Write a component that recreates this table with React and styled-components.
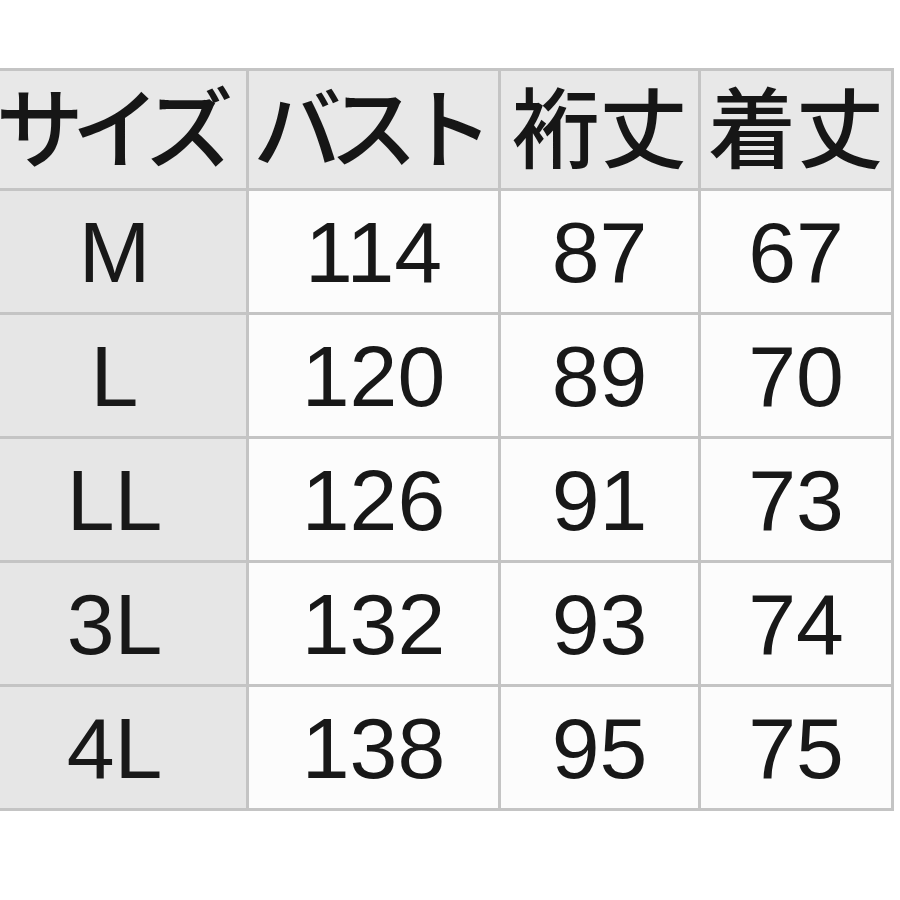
import React from 'react'
import styled, { createGlobalStyle } from 'styled-components'

const GlobalStyle = createGlobalStyle`
  html, body {
    margin: 0;
    padding: 0;
    background: #ffffff;
    overflow: hidden;
  }
`

const Page = styled.div`
  width: 900px;
  height: 900px;
  padding-top: 68px;
  box-sizing: border-box;
  background: #ffffff;
  overflow: hidden;
`

const Table = styled.div`
  display: grid;
  grid-template-columns: 263px 249px 197px 190px;
  grid-template-rows: 117px repeat(5, 121px);
  gap: 3px;
  width: max-content;
  margin-left: -20px;
  border: 3px solid #c4c4c4;
  background: #c4c4c4;
`

const HeadCell = styled.div`
  display: flex;
  align-items: center;
  justify-content: center;
  padding-bottom: 14px;
  box-sizing: border-box;
  background: #e8e8e8;
  color: #161616;
  font-family: "Noto Sans CJK JP", sans-serif;
  font-size: 88px;
  font-weight: 500;
  line-height: 1;
  letter-spacing: ${(p) => (p.$kana ? '-12px' : '0')};
  text-indent: ${(p) => (p.$kana ? '-12px' : '0')};
  white-space: nowrap;
`

const Cell = styled.div`
  display: flex;
  align-items: center;
  justify-content: center;
  background: ${(p) => (p.$label ? '#e6e6e6' : '#fcfcfc')};
  color: #181818;
  font-family: "Liberation Sans", Arial, sans-serif;
  font-size: 86px;
  line-height: 1;
  white-space: nowrap;
`

const headers = [
  { text: 'サイズ', kana: true },
  { text: 'バスト', kana: true },
  { text: '裄丈', kana: false },
  { text: '着丈', kana: false },
]

const rows = [
  ['M', '114', '87', '67'],
  ['L', '120', '89', '70'],
  ['LL', '126', '91', '73'],
  ['3L', '132', '93', '74'],
  ['4L', '138', '95', '75'],
]

export default function App() {
  return (
    <>
      <GlobalStyle />
      <Page>
        <Table>
          {headers.map((h) => (
            <HeadCell key={h.text} $kana={h.kana}>
              {h.text}
            </HeadCell>
          ))}
          {rows.map((row) =>
            row.map((value, i) => (
              <Cell key={row[0] + i} $label={i === 0}>
                {value}
              </Cell>
            ))
          )}
        </Table>
      </Page>
    </>
  )
}
